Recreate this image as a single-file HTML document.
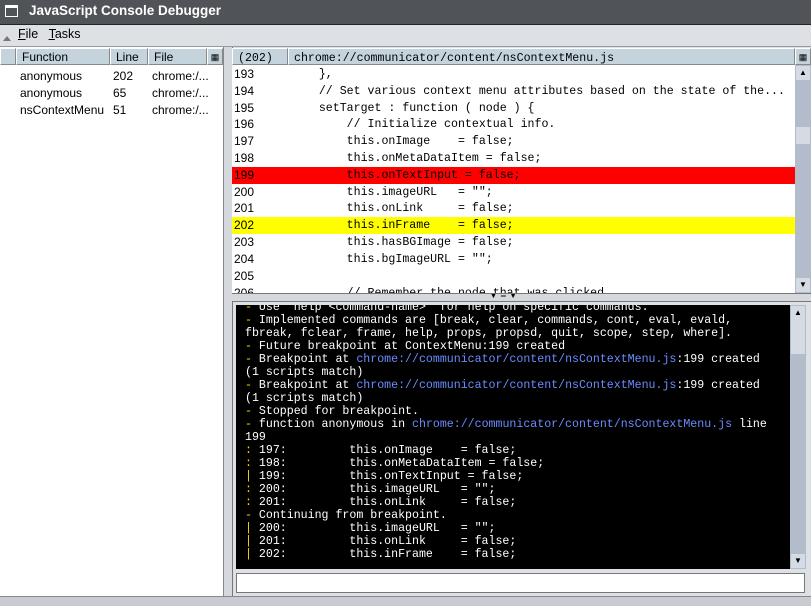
<!DOCTYPE html>
<html><head><style>
body{margin:0;width:811px;height:605px;overflow:hidden;background:#dde1e6;font-family:"Liberation Sans",sans-serif;font-size:12px;position:relative}
.a{position:absolute}
.mono{font-family:"Liberation Mono",monospace;font-size:11.6px}
.hdr{position:absolute;top:48px;height:17px;background:#c5d3dc;border:1px solid #888;border-top-color:#fff;border-left-color:#fff;box-sizing:border-box;line-height:16px;padding-left:5px}
.row{position:absolute;left:0;right:0;height:17px;line-height:17px;white-space:pre}
.cl{position:absolute;left:0;white-space:pre;height:13px;line-height:13px}
.y{color:#ffd800}.b{color:#6a8cff}
</style></head><body>
<div class="a" style="left:0;top:0;width:811px;height:24px;background:#505357;border-bottom:1px solid #222"></div>
<div class="a" style="left:5px;top:5px;width:13px;height:12px;border:1px solid #fff;border-top-width:3px;box-sizing:border-box;background:#505357"></div>
<div class="a" style="left:29px;top:3px;color:#fff;font-weight:bold;font-size:13.5px">JavaScript Console Debugger</div>
<div class="a" style="left:3px;top:36px;width:0;height:0;border:4px solid transparent;border-bottom:5px solid #777;border-top:0"></div>
<div class="a" style="left:18px;top:27px;font-size:12.5px"><u>F</u>ile&nbsp;&nbsp;&nbsp;<u>T</u>asks</div>
<div class="a" style="left:0;top:46px;width:811px;height:1px;background:#999"></div>
<!-- left panel -->
<div class="a" style="left:0;top:47px;width:223px;height:549px;background:#fff;border-right:1px solid #888"></div>
<div class="hdr" style="left:0;width:16px;padding:0"></div>
<div class="hdr" style="left:16px;width:94px">Function</div>
<div class="hdr" style="left:110px;width:38px">Line</div>
<div class="hdr" style="left:148px;width:59px">File</div>
<div class="hdr" style="left:207px;width:16px;padding:0;font-size:9px;text-align:center">▦</div>
<div class="a" style="left:20px;top:68px;line-height:17px">anonymous<br>anonymous<br>nsContextMenu</div>
<div class="a" style="left:113px;top:68px;line-height:17px">202<br>65<br>51</div>
<div class="a" style="left:152px;top:68px;line-height:17px">chrome:/...<br>chrome:/...<br>chrome:/...</div>
<!-- splitter -->
<div class="a" style="left:224px;top:47px;width:8px;height:549px;background:#d5d9de;border-right:1px solid #777"></div>
<!-- code -->
<div class="hdr" style="left:232px;width:56px" ><span class="mono">(202)</span></div>
<div class="hdr" style="left:288px;width:507px"><span class="mono">chrome://communicator/content/nsContextMenu.js</span></div>
<div class="hdr" style="left:795px;width:16px;padding:0;font-size:9px;text-align:center">▦</div>
<div class="a" style="left:232px;top:65px;width:563px;height:228px;background:#fff;overflow:hidden">
<div class="row" style="top:1px"><span class="a" style="left:2px">193</span><span class="a mono" style="left:59px">    },</span></div>
<div class="row" style="top:18px"><span class="a" style="left:2px">194</span><span class="a mono" style="left:59px">    // Set various context menu attributes based on the state of the...</span></div>
<div class="row" style="top:35px"><span class="a" style="left:2px">195</span><span class="a mono" style="left:59px">    setTarget : function ( node ) {</span></div>
<div class="row" style="top:51px"><span class="a" style="left:2px">196</span><span class="a mono" style="left:59px">        // Initialize contextual info.</span></div>
<div class="row" style="top:68px"><span class="a" style="left:2px">197</span><span class="a mono" style="left:59px">        this.onImage    = false;</span></div>
<div class="row" style="top:85px"><span class="a" style="left:2px">198</span><span class="a mono" style="left:59px">        this.onMetaDataItem = false;</span></div>
<div class="row" style="top:102px;background:#f00"><span class="a" style="left:2px">199</span><span class="a mono" style="left:59px">        this.onTextInput = false;</span></div>
<div class="row" style="top:119px"><span class="a" style="left:2px">200</span><span class="a mono" style="left:59px">        this.imageURL   = "";</span></div>
<div class="row" style="top:135px"><span class="a" style="left:2px">201</span><span class="a mono" style="left:59px">        this.onLink     = false;</span></div>
<div class="row" style="top:152px;background:#ff0"><span class="a" style="left:2px">202</span><span class="a mono" style="left:59px">        this.inFrame    = false;</span></div>
<div class="row" style="top:169px"><span class="a" style="left:2px">203</span><span class="a mono" style="left:59px">        this.hasBGImage = false;</span></div>
<div class="row" style="top:186px"><span class="a" style="left:2px">204</span><span class="a mono" style="left:59px">        this.bgImageURL = "";</span></div>
<div class="row" style="top:203px"><span class="a" style="left:2px">205</span></div>
<div class="row" style="top:220px"><span class="a" style="left:2px">206</span><span class="a mono" style="left:59px">        // Remember the node that was clicked.</span></div>
</div>
<div class="a" style="left:795px;top:65px;width:16px;height:228px;background:#b3bccb"></div>
<div class="a" style="left:796px;top:66px;width:14px;height:14px;background:#d5dbe3;font-size:8px;text-align:center;line-height:14px">▲</div>
<div class="a" style="left:796px;top:127px;width:14px;height:17px;background:#d5dbe3"></div>
<div class="a" style="left:796px;top:278px;width:14px;height:14px;background:#d5dbe3;font-size:8px;text-align:center;line-height:14px">▼</div>
<div class="a" style="left:232px;top:293px;width:579px;height:7px;background:#d5d9de;border-top:1px solid #777;border-bottom:1px solid #777"></div>
<div class="a" style="left:490px;top:293px;font-size:7px">▼ &nbsp;═ &nbsp;▼</div>
<!-- console -->
<div class="a" style="left:236px;top:305px;width:554px;height:264px;background:#000;overflow:hidden;color:#fff">
<div class="mono" style="position:absolute;left:9px;top:-4px">
<div class="cl" style="top:0"><span class="y">-</span> Use "help &lt;command-name&gt;" for help on specific commands.</div>
<div class="cl" style="top:13px"><span class="y">-</span> Implemented commands are [break, clear, commands, cont, eval, evald,</div>
<div class="cl" style="top:26px">fbreak, fclear, frame, help, props, propsd, quit, scope, step, where].</div>
<div class="cl" style="top:39px"><span class="y">-</span> Future breakpoint at ContextMenu:199 created</div>
<div class="cl" style="top:52px"><span class="y">-</span> Breakpoint at <span class="b">chrome://communicator/content/nsContextMenu.js</span>:199 created</div>
<div class="cl" style="top:65px">(1 scripts match)</div>
<div class="cl" style="top:78px"><span class="y">-</span> Breakpoint at <span class="b">chrome://communicator/content/nsContextMenu.js</span>:199 created</div>
<div class="cl" style="top:91px">(1 scripts match)</div>
<div class="cl" style="top:104px"><span class="y">-</span> Stopped for breakpoint.</div>
<div class="cl" style="top:117px"><span class="y">-</span> function anonymous in <span class="b">chrome://communicator/content/nsContextMenu.js</span> line</div>
<div class="cl" style="top:130px">199</div>
<div class="cl" style="top:143px"><span class="y">:</span> 197:         this.onImage    = false;</div>
<div class="cl" style="top:156px"><span class="y">:</span> 198:         this.onMetaDataItem = false;</div>
<div class="cl" style="top:169px"><span class="y">|</span> 199:         this.onTextInput = false;</div>
<div class="cl" style="top:182px"><span class="y">:</span> 200:         this.imageURL   = "";</div>
<div class="cl" style="top:195px"><span class="y">:</span> 201:         this.onLink     = false;</div>
<div class="cl" style="top:208px"><span class="y">-</span> Continuing from breakpoint.</div>
<div class="cl" style="top:221px"><span class="y">|</span> 200:         this.imageURL   = "";</div>
<div class="cl" style="top:234px"><span class="y">|</span> 201:         this.onLink     = false;</div>
<div class="cl" style="top:247px"><span class="y">|</span> 202:         this.inFrame    = false;</div>
</div></div>
<div class="a" style="left:790px;top:305px;width:16px;height:264px;background:#b3bccb"></div>
<div class="a" style="left:791px;top:306px;width:14px;height:14px;background:#d5dbe3;font-size:8px;text-align:center;line-height:14px">▲</div>
<div class="a" style="left:791px;top:320px;width:14px;height:34px;background:#d5dbe3"></div>
<div class="a" style="left:791px;top:554px;width:14px;height:14px;background:#d5dbe3;font-size:8px;text-align:center;line-height:14px">▼</div>
<div class="a" style="left:236px;top:573px;width:569px;height:20px;background:#fff;border:1px solid #777;box-sizing:border-box"></div>
<div class="a" style="left:0;top:596px;width:811px;height:9px;background:#c8ccd2;border-top:1px solid #888"></div>
</body></html>
